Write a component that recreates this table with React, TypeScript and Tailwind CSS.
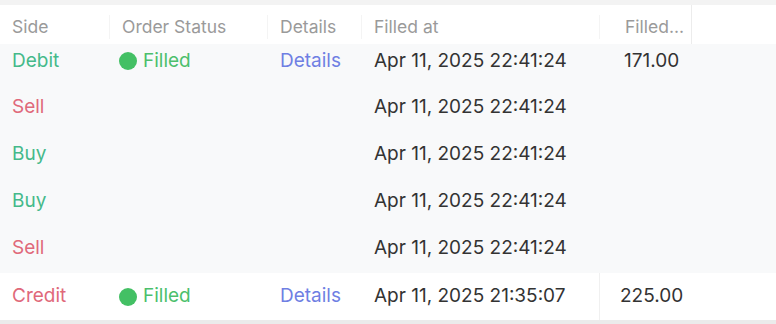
import React from "react";

type Row = {
  side: string;
  sideColor: string;
  status?: boolean;
  details?: boolean;
  at: string;
  amount?: string;
};

const rows: Row[] = [
  { side: "Sell", sideColor: "text-[#e0697a]", at: "Apr 11, 2025 22:41:24" },
  { side: "Buy", sideColor: "text-[#45b98a]", at: "Apr 11, 2025 22:41:24" },
  { side: "Buy", sideColor: "text-[#45b98a]", at: "Apr 11, 2025 22:41:24" },
  { side: "Sell", sideColor: "text-[#e0697a]", at: "Apr 11, 2025 22:41:24" },
];

function Cells({ r, divider, amountPad }: { r: Row; divider?: boolean; amountPad?: string }) {
  return (
    <>
      <div className={`w-[110px] pl-3 ${r.sideColor}`}>{r.side}</div>
      <div className="w-[158px] pl-[9px] flex items-center gap-[6px] text-[#4cbf6c]">
        {r.status && (
          <>
            <span className="w-[18px] h-[18px] rounded-full bg-[#43c064] inline-block" />
            <span>Filled</span>
          </>
        )}
      </div>
      <div className="w-[94px] pl-3 text-[#6f7fe3]">{r.details ? "Details" : ""}</div>
      <div className={`w-[238px] pl-3 h-full flex items-center text-[#333333] ${divider ? "border-r border-[#f0f0f0]" : ""}`}>{r.at}</div>
      <div className={`w-[92px] ${amountPad ?? "pl-[20px]"} text-[#333333]`}>{r.amount ?? ""}</div>
      <div className="flex-1" />
    </>
  );
}

export default function App() {
  return (
    <div className="w-[776px] h-[324px] bg-white overflow-hidden text-[19px] font-['Inter',sans-serif]">
      <div className="h-[5px] bg-[#f3f3f3]" />
      <div className="h-[39px] flex items-center pt-[5px] text-[#9a9a9a] text-[17.5px] bg-white">
        <div className="w-[110px] pl-3 h-[24px] flex items-center border-r border-[#f4f4f4]">Side</div>
        <div className="w-[158px] pl-3 h-[24px] flex items-center border-r border-[#f4f4f4]">Order Status</div>
        <div className="w-[94px] pl-3 h-[24px] flex items-center border-r border-[#f4f4f4]">Details</div>
        <div className="w-[238px] pl-3 h-[24px] flex items-center border-r border-[#f4f4f4]">Filled at</div>
        <div className="w-[92px] pl-[25px] h-[39px] -mt-[5px] pt-[5px] flex items-center border-r border-[#ececec]">Filled...</div>
        <div className="flex-1" />
      </div>
      <div className="bg-[#f8f9fa]">
        <div className="h-[40px] flex items-center pb-[6px]">
          <Cells
            r={{ side: "Debit", sideColor: "text-[#45b98a]", status: true, details: true, at: "Apr 11, 2025 22:41:24", amount: "171.00" }}
            amountPad="pl-[24px]"
          />
        </div>
        {rows.map((r, i) => (
          <div key={i} className="h-[47px] flex items-center">
            <Cells r={r} />
          </div>
        ))}
        <div className="h-[1px]" />
      </div>
      <div className="h-[47px] flex items-center bg-white">
        <Cells
          r={{ side: "Credit", sideColor: "text-[#e0697a]", status: true, details: true, at: "Apr 11, 2025 21:35:07", amount: "225.00" }}
          divider
        />
      </div>
      <div className="h-[4px] bg-[#ebebeb]" />
    </div>
  );
}
